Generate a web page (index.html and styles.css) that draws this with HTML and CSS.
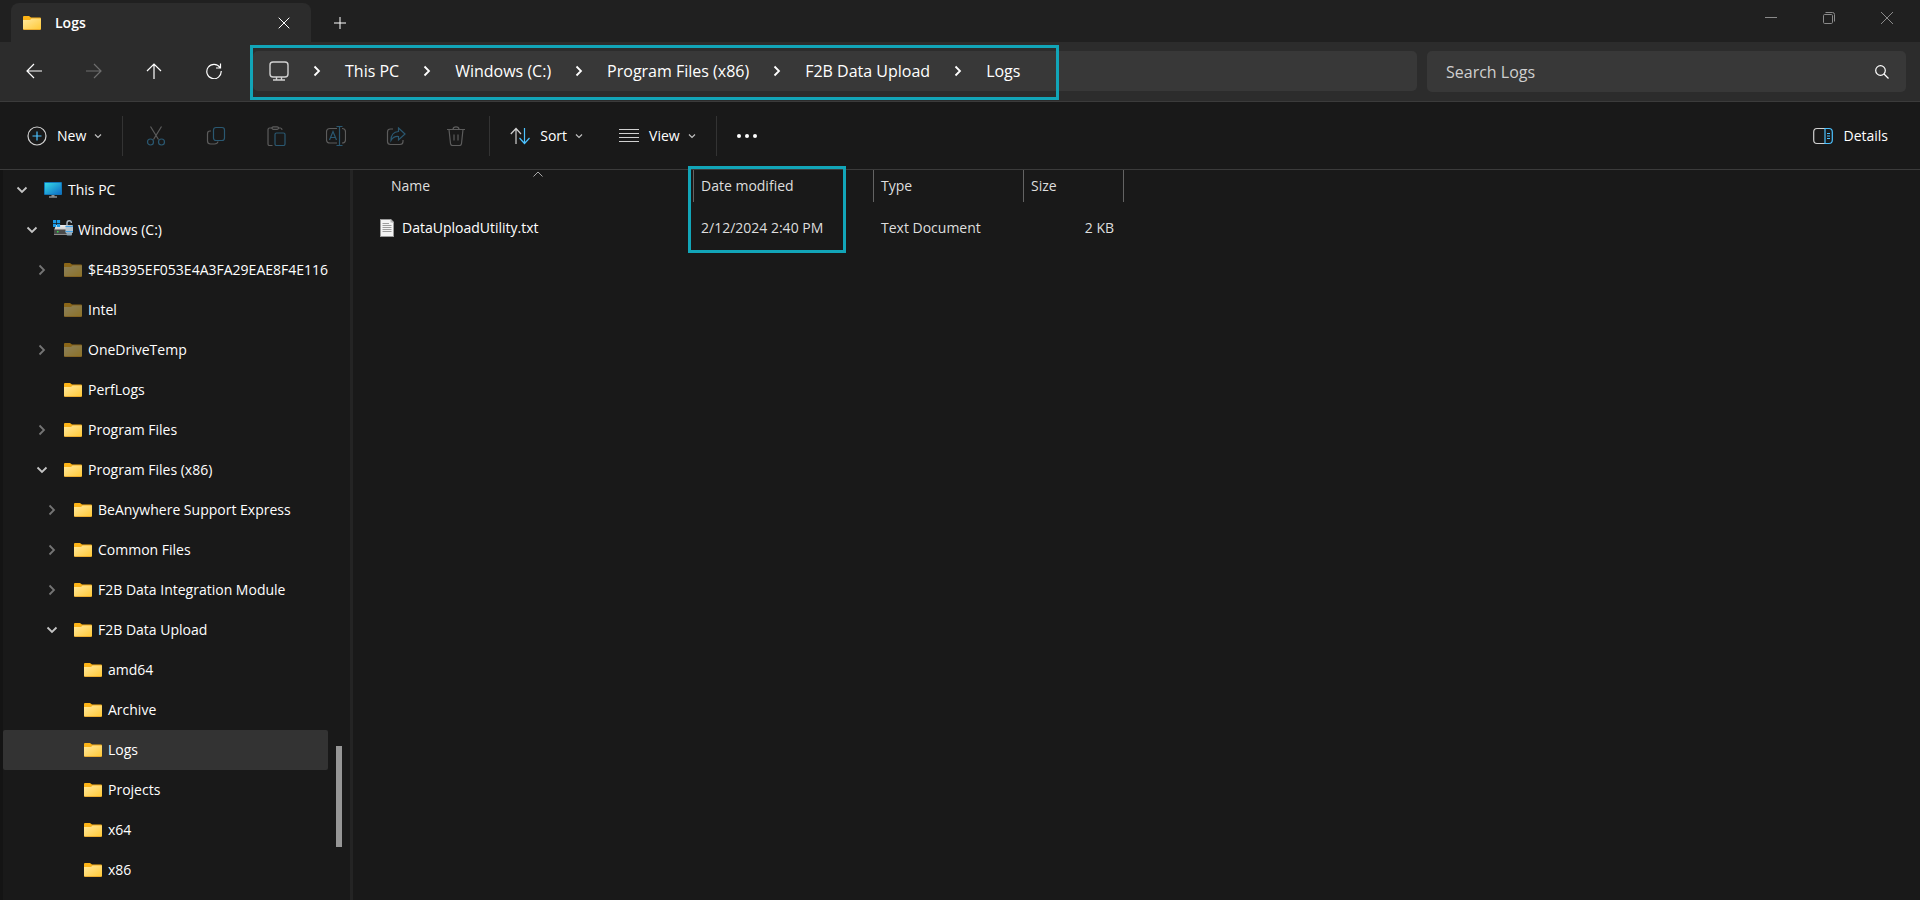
FILE: index.html
```html
<!DOCTYPE html>
<html lang="en">
<head>
    <meta charset="UTF-8">
    <meta name="viewport" content="width=device-width, initial-scale=1.0">
    <title>Logs</title>
    <link rel="stylesheet" href="styles.css">
</head>
<body>

    <!-- Shared icons -->
    <svg class="sprite" aria-hidden="true">
        <defs>
            <linearGradient id="folderFill" x1="0" y1="0" x2="1" y2="1">
                <stop offset="0" stop-color="#ffe9a0"/>
                <stop offset="1" stop-color="#ffc937"/>
            </linearGradient>
            <linearGradient id="screenFill" x1="0" y1="0" x2="1" y2="1">
                <stop offset="0" stop-color="#34d8e6"/>
                <stop offset="1" stop-color="#0f6cc4"/>
            </linearGradient>
            <linearGradient id="driveFill" x1="0" y1="0" x2="0" y2="1">
                <stop offset="0" stop-color="#f0f0f0"/>
                <stop offset="1" stop-color="#c4c4c4"/>
            </linearGradient>
        </defs>
        <symbol id="folder" viewBox="0 0 18 14">
            <path d="M0 1q0-1 1-1h5l2 1.500h9q1 0 1 1V5H0z" fill="#fcb316"/>
            <path d="M0 4h7l1.500-1.500H17.500q.5 0 .5.500V13q0 1-1 1H1q-1 0-1-1z" fill="#e5a024"/>
            <path d="M0 4h7l1.500-1.500H17.500q.5 0 .5.500V12.500q0 .7-.7.7H.7q-.7 0-.7-.7z" fill="url(#folderFill)"/>
        </symbol>
        <symbol id="monitor" viewBox="0 0 18 16">
            <rect width="18" height="13" rx="1" fill="#1176b8"/>
            <rect x="1" y="1" width="16" height="11" fill="url(#screenFill)"/>
            <path d="M7.500 13h3v1.500h-3z" fill="#8a8f94"/>
            <path d="M5 14.500h8v1H5z" fill="#c5c9cc"/>
        </symbol>
        <symbol id="drive" viewBox="0 0 20 16">
            <path d="M3 5h12l2 5.500H1z" fill="url(#driveFill)"/>
            <path d="M0 0h3.200v3.200H0zM3.900 0h3.200v3.200H3.900zM0 3.900h3.200v3.200H0zM3.900 3.900h3.200v3.200H3.900z" fill="#1c9be6"/>
            <rect x="1" y="9.500" width="14" height="5.500" fill="#4a4a4a"/>
            <path d="M1 14h14v1H1z" fill="#8c8c8c"/>
            <rect x="4" y="11" width="1.500" height="1.500" fill="#35e04a"/>
            <path d="M14 5V3q0-2.300 2.200-2.300T18.400 3" fill="none" stroke="#a9b6c0" stroke-width="1.400"/>
            <rect x="12.500" y="5" width="7.500" height="8" rx="1" fill="#b3c3ce"/>
            <path d="M12.500 6h7.500v1h-7.500zM12.500 11h7.500v1h-7.500z" fill="#3fa0e6"/>
            <path d="M13.500 12.500h5.500v2q0 1-1 1h-3.500q-1 0-1-1z" fill="#8ba4b5"/>
        </symbol>
        <symbol id="chevDown" viewBox="0 0 12 12">
            <path d="M1.500 3.500L6 8l4.500-4.500" fill="none" stroke="currentColor" stroke-width="1.800"/>
        </symbol>
        <symbol id="chevRight" viewBox="0 0 12 12">
            <path d="M3.500 1.500L8 6l-4.500 4.500" fill="none" stroke="currentColor" stroke-width="1.800"/>
        </symbol>
        <symbol id="chevSmall" viewBox="0 0 8 8">
            <path d="M1 2.500l3 3 3-3" fill="none" stroke="currentColor" stroke-width="1.200"/>
        </symbol>
    </svg>

    <div class="window">

        <!-- Title bar -->
        <header class="titlebar">
            <div class="tab">
                <svg class="folder-icon"><use href="#folder"/></svg>
                <span class="tab-title">Logs</span>
                <button class="tab-close" aria-label="Close tab">
                    <svg width="12" height="12" viewBox="0 0 12 12"><path d="M.7.7l10.600 10.600M11.300.7L.7 11.300"/></svg>
                </button>
            </div>
            <button class="tab-new" aria-label="New tab">
                <svg width="12" height="12" viewBox="0 0 12 12"><path d="M6 0v12M0 6h12"/></svg>
            </button>
            <div class="window-buttons">
                <button aria-label="Minimize"><svg width="12" height="12" viewBox="0 0 12 12"><path d="M0 5.500h12"/></svg></button>
                <button aria-label="Restore"><svg width="12" height="12" viewBox="0 0 12 12"><rect x=".5" y="2.500" width="9" height="9" rx="1.200"/><path d="M2.500.5H9.500q2 0 2 2V9.500"/></svg></button>
                <button aria-label="Close"><svg width="12" height="12" viewBox="0 0 12 12"><path d="M0 0l12 12M12 0L0 12"/></svg></button>
            </div>
        </header>

        <!-- Navigation bar -->
        <div class="navbar">
            <div class="nav-buttons">
                <button aria-label="Back"><svg width="16" height="16" viewBox="0 0 16 16"><path d="M16 8H1M8 1L1 8l7 7"/></svg></button>
                <button aria-label="Forward" disabled><svg width="16" height="16" viewBox="0 0 16 16"><path d="M0 8h15M8 1l7 7-7 7"/></svg></button>
                <button aria-label="Up"><svg width="16" height="16" viewBox="0 0 16 16"><path d="M8 16V1M1 8l7-7 7 7"/></svg></button>
                <button aria-label="Refresh"><svg width="16" height="16" viewBox="0 0 16 16"><path d="M14 4.500A7.200 7.200 0 1 0 15.200 8M14.500.5v4.500H10"/></svg></button>
            </div>
            <div class="address">
                <nav class="breadcrumb" aria-label="Address">
                    <svg class="crumb-pc" width="20" height="20" viewBox="0 0 20 20"><rect x="1" y="1" width="18" height="15" rx="3"/><path d="M7.500 16v3M12.500 16v3M4 19h12"/></svg>
                    <svg class="crumb-sep"><use href="#chevRight"/></svg>
                    <a href="#">This PC</a>
                    <svg class="crumb-sep"><use href="#chevRight"/></svg>
                    <a href="#">Windows (C:)</a>
                    <svg class="crumb-sep"><use href="#chevRight"/></svg>
                    <a href="#">Program Files (x86)</a>
                    <svg class="crumb-sep"><use href="#chevRight"/></svg>
                    <a href="#">F2B Data Upload</a>
                    <svg class="crumb-sep"><use href="#chevRight"/></svg>
                    <a href="#">Logs</a>
                </nav>
            </div>
            <form class="search">
                <input type="text" placeholder="Search Logs" aria-label="Search Logs">
                <button type="button" aria-label="Search">
                    <svg width="14" height="14" viewBox="0 0 14 14"><circle cx="5.500" cy="5.500" r="4.800"/><path d="M9 9l4.500 4.500"/></svg>
                </button>
            </form>
        </div>

        <!-- Command bar -->
        <div class="commandbar">
            <button class="command new">
                <svg class="cmd-icon" viewBox="0 0 20 20"><circle cx="10" cy="10" r="9"/><path class="blue" d="M10 5.500v9M5.500 10h9"/></svg>
                <span>New</span>
                <svg class="caret"><use href="#chevSmall"/></svg>
            </button>
            <span class="divider"></span>
            <div class="file-actions">
                <button aria-label="Cut" disabled><svg class="cmd-icon" viewBox="0 0 20 20"><path d="M4.500.5l8 13M15.500.5l-8 13"/><circle class="blue" cx="4.500" cy="16" r="3"/><circle class="blue" cx="15.500" cy="16" r="3"/></svg></button>
                <button aria-label="Copy" disabled><svg class="cmd-icon" viewBox="0 0 20 20"><path d="M5 5H4Q1.500 5 1.500 8v7q0 3 3 3h4q3 0 3.500-2.500"/><rect class="blue" x="7.500" y="1.500" width="11" height="13" rx="2.500"/></svg></button>
                <button aria-label="Paste" disabled><svg class="cmd-icon" viewBox="0 0 20 20"><path d="M6.500 19.500h-3q-1.500 0-1.500-1.500V4q0-2 1.500-2H6M12 2h2.500Q16 2 16 4"/><rect x="6" y=".8" width="6.500" height="2.500" rx="1.200"/><rect class="blue" x="9" y="7" width="10" height="12.500" rx="1.500"/></svg></button>
                <button aria-label="Rename" disabled><svg class="cmd-icon" viewBox="0 0 20 20"><path d="M11 2.500H4q-3.500 0-3.500 3.500v7.500Q.5 17 4 17h7M16 2.500q3.500 0 3.500 3.500v7.500Q19.500 17 16 17"/><path class="blue" d="M3.500 14L7 5.500 10.500 14M5 11.500h4M13.500.5v19M10.500.5h6M10.500 19.500h6"/></svg></button>
                <button aria-label="Share" disabled><svg class="cmd-icon" viewBox="0 0 20 20"><path d="M7 3H4.500Q1.500 3 1.500 6v9.500q0 3 3 3H14q3 0 3-3V14"/><path class="blue" d="M12.500 2l6.500 6-6.500 6v-3.500Q7.500 10 5 14.500 5 6 12.500 5.500z"/></svg></button>
                <button aria-label="Delete" disabled><svg class="cmd-icon" viewBox="0 0 20 20"><path d="M1 3.500h18M7 3.500Q7 .8 10 .8t3 2.700M3 3.500l1.500 14q.2 2 2 2h7q1.800 0 2-2L17 3.500M8 8.500v6M12 8.500v6"/></svg></button>
            </div>
            <span class="divider"></span>
            <button class="command">
                <svg class="cmd-icon" viewBox="0 0 20 20"><path d="M6 18V2.500M.8 8L6 2.500 11 8"/><path class="blue" d="M14.500 2v15.500M9.500 12l5 5.500 5-5.500"/></svg>
                <span>Sort</span>
                <svg class="caret"><use href="#chevSmall"/></svg>
            </button>
            <button class="command view">
                <svg class="cmd-icon" viewBox="0 0 20 20"><path d="M0 3.500h20M0 7.500h20M0 11.500h20M0 15.500h20"/></svg>
                <span>View</span>
                <svg class="caret"><use href="#chevSmall"/></svg>
            </button>
            <span class="divider"></span>
            <button class="more" aria-label="See more">
                <svg width="20" height="4" viewBox="0 0 20 4"><circle cx="2" cy="2" r="2"/><circle cx="10" cy="2" r="2"/><circle cx="18" cy="2" r="2"/></svg>
            </button>
            <button class="command details">
                <svg class="cmd-icon" viewBox="0 0 20 20"><path d="M12 2.500H4Q.7 2.500.7 6v8q0 3.500 3.300 3.500h8"/><path class="blue" d="M12 2.500h4q3.300 0 3.300 3.500v8q0 3.500-3.300 3.500h-4zM14 7.500h3M14 10h3M14 12.500h3"/></svg>
                <span>Details</span>
            </button>
        </div>

        <div class="content">

            <!-- Folder tree -->
            <aside class="sidebar">
                <ul class="tree">
                    <li class="level-0"><button class="toggle open" aria-label="Collapse"><svg><use href="#chevDown"/></svg></button><svg class="tree-icon"><use href="#monitor"/></svg><a href="#">This PC</a></li>
                    <li class="level-1"><button class="toggle open" aria-label="Collapse"><svg><use href="#chevDown"/></svg></button><svg class="tree-icon drive-icon"><use href="#drive"/></svg><a href="#">Windows (C:)</a></li>
                    <li class="level-2"><button class="toggle" aria-label="Expand"><svg><use href="#chevRight"/></svg></button><svg class="tree-icon dim"><use href="#folder"/></svg><a href="#">$E4B395EF053E4A3FA29EAE8F4E116</a></li>
                    <li class="level-2"><span class="toggle"></span><svg class="tree-icon dim"><use href="#folder"/></svg><a href="#">Intel</a></li>
                    <li class="level-2"><button class="toggle" aria-label="Expand"><svg><use href="#chevRight"/></svg></button><svg class="tree-icon dim"><use href="#folder"/></svg><a href="#">OneDriveTemp</a></li>
                    <li class="level-2"><span class="toggle"></span><svg class="tree-icon"><use href="#folder"/></svg><a href="#">PerfLogs</a></li>
                    <li class="level-2"><button class="toggle" aria-label="Expand"><svg><use href="#chevRight"/></svg></button><svg class="tree-icon"><use href="#folder"/></svg><a href="#">Program Files</a></li>
                    <li class="level-2"><button class="toggle open" aria-label="Collapse"><svg><use href="#chevDown"/></svg></button><svg class="tree-icon"><use href="#folder"/></svg><a href="#">Program Files (x86)</a></li>
                    <li class="level-3"><button class="toggle" aria-label="Expand"><svg><use href="#chevRight"/></svg></button><svg class="tree-icon"><use href="#folder"/></svg><a href="#">BeAnywhere Support Express</a></li>
                    <li class="level-3"><button class="toggle" aria-label="Expand"><svg><use href="#chevRight"/></svg></button><svg class="tree-icon"><use href="#folder"/></svg><a href="#">Common Files</a></li>
                    <li class="level-3"><button class="toggle" aria-label="Expand"><svg><use href="#chevRight"/></svg></button><svg class="tree-icon"><use href="#folder"/></svg><a href="#">F2B Data Integration Module</a></li>
                    <li class="level-3"><button class="toggle open" aria-label="Collapse"><svg><use href="#chevDown"/></svg></button><svg class="tree-icon"><use href="#folder"/></svg><a href="#">F2B Data Upload</a></li>
                    <li class="level-4"><span class="toggle"></span><svg class="tree-icon"><use href="#folder"/></svg><a href="#">amd64</a></li>
                    <li class="level-4"><span class="toggle"></span><svg class="tree-icon"><use href="#folder"/></svg><a href="#">Archive</a></li>
                    <li class="level-4 selected"><span class="toggle"></span><svg class="tree-icon"><use href="#folder"/></svg><a href="#">Logs</a></li>
                    <li class="level-4"><span class="toggle"></span><svg class="tree-icon"><use href="#folder"/></svg><a href="#">Projects</a></li>
                    <li class="level-4"><span class="toggle"></span><svg class="tree-icon"><use href="#folder"/></svg><a href="#">x64</a></li>
                    <li class="level-4"><span class="toggle"></span><svg class="tree-icon"><use href="#folder"/></svg><a href="#">x86</a></li>
                </ul>
                <div class="scrollbar"><div class="thumb"></div></div>
            </aside>

            <!-- File list -->
            <main class="files">
                <table>
                    <colgroup>
                        <col class="col-name">
                        <col class="col-date">
                        <col class="col-type">
                        <col class="col-size">
                    </colgroup>
                    <thead>
                        <tr>
                            <th class="sorted">Name<svg width="10" height="6" viewBox="0 0 10 6"><path d="M.5 5.500L5 1l4.500 4.500"/></svg></th>
                            <th class="marked">Date modified</th>
                            <th>Type</th>
                            <th>Size</th>
                        </tr>
                    </thead>
                    <tbody>
                        <tr>
                            <td class="file-name">
                                <a href="#">
                                    <svg width="14" height="18" viewBox="0 0 14 18"><path d="M0 0h11l3 3v15H0z" fill="#9a9a9a"/><path d="M1 1h9.500L13 3.500V17H1z" fill="#f4f4f4"/><path d="M10.500 0v3.500H14z" fill="#b5b5b5"/><path d="M2.500 4.500H9M2.500 6.500h9M2.500 8.500h9M2.500 10.500h9M2.500 12.500h9" stroke="#9d9d9d" fill="none"/></svg>
                                    DataUploadUtility.txt
                                </a>
                            </td>
                            <td>2/12/2024 2:40 PM</td>
                            <td>Text Document</td>
                            <td class="file-size">2 KB</td>
                        </tr>
                    </tbody>
                </table>
            </main>

        </div>
    </div>

</body>
</html>
```
FILE: styles.css
```css
/* General Styles */
*,
*::after {
    box-sizing: border-box;
}

body {
    margin: 0;
    font-family: "Open Sans", "Noto Sans", sans-serif;
    font-size: 14px;
    line-height: 20px;
    color: #fff;
    background-color: #191919;
}

a {
    color: inherit;
    text-decoration: none;
}

button {
    display: flex;
    flex: none;
    align-items: center;
    justify-content: center;
    padding: 0;
    border: none;
    background: none;
    color: inherit;
    font: inherit;
}

svg {
    flex: none;
    display: block;
}

button svg,
.crumb-pc,
.sorted svg {
    fill: none;
    stroke: currentColor;
}

.sprite {
    position: absolute;
    width: 0;
    height: 0;
}

.window {
    display: flex;
    flex-direction: column;
    min-height: 100vh;
}

/* Title bar */
.titlebar {
    display: flex;
    height: 42px;
    padding-left: 11px;
    background-color: #202020;
}

.tab {
    display: flex;
    align-items: center;
    width: 300px;
    margin-top: 3px;
    padding: 0 12px;
    border-radius: 8px 8px 0 0;
    background-color: #2c2c2c;
}

.folder-icon {
    width: 18px;
    height: 14px;
}

.tab-title {
    flex: 1;
    margin-left: 14px;
    font-weight: 600;
}

.tab-close {
    width: 30px;
    height: 30px;
}

.tab-new {
    width: 58px;
    height: 46px;
}

.window-buttons {
    display: flex;
    margin-left: auto;
    padding-right: 4px;
    color: #8a8a8a;
}

.window-buttons button {
    width: 58px;
    height: 36px;
}

/* Navigation bar */
.navbar {
    display: flex;
    align-items: flex-start;
    gap: 10px;
    padding: 9px 14px 9px 4px;
    border-bottom: 1px solid #3b3b3b;
    background-color: #2c2c2c;
}

.nav-buttons {
    display: flex;
    width: 239px;
}

.nav-buttons button {
    width: 60px;
    height: 40px;
    stroke-width: 1.2;
}

.nav-buttons button:disabled {
    color: #6e6e6e;
}

.address,
.search {
    display: flex;
    height: 40px;
    border-radius: 5px;
    background-color: #383838;
    font-size: 16px;
}

.address {
    flex: 1;
}

.breadcrumb {
    position: relative;
    display: flex;
    align-items: center;
    padding: 0 39px 0 16px;
}

/* Highlight frames */
.breadcrumb::after,
.marked::after {
    content: "";
    position: absolute;
    border: 3px solid #12a5b8;
}

.breadcrumb::after {
    inset: -6px 0 -9px -3px;
}

.crumb-sep {
    width: 12px;
    height: 12px;
    margin: 0 22px;
}

.crumb-pc {
    color: #d0d0d0;
    stroke-width: 1.4;
}

.search {
    width: 479px;
    height: 41px;
}

.search input {
    flex: 1;
    min-width: 0;
    padding: 0 19px;
    border: none;
    outline: none;
    background: none;
    color: #fff;
    font: inherit;
}

.search input::placeholder {
    color: #cfcfcf;
    opacity: 1;
}

.search button {
    width: 48px;
    stroke-width: 1.2;
}

/* Command bar */
.commandbar {
    display: flex;
    align-items: center;
    height: 68px;
    padding: 0 32px 0 27px;
    border-bottom: 1px solid #3b3b3b;
}

.command {
    gap: 10px;
    height: 40px;
}

.cmd-icon {
    width: 20px;
    height: 20px;
    color: #d0d0d0;
    stroke-width: 1.2;
}

.blue {
    stroke: #4cc2ff;
}

.caret {
    width: 8px;
    height: 8px;
    margin-left: -2px;
    color: #c0c0c0;
}

.divider {
    width: 1px;
    height: 40px;
    margin: 0 20px;
    background-color: #333;
}

.file-actions {
    display: flex;
    margin: 0 -17px;
}

.file-actions button {
    width: 60px;
    height: 40px;
}

.file-actions .cmd-icon {
    color: #5c5c5c;
}

.file-actions .blue {
    stroke: #2a5871;
}

.view {
    margin-left: 36px;
}

.more svg {
    fill: #fff;
    stroke: none;
}

.details {
    margin-left: auto;
}

/* Folder tree */
.content {
    display: flex;
    flex: 1;
}

.sidebar {
    display: flex;
    justify-content: space-between;
    width: 353px;
    border-left: 3px solid #141414;
    border-right: 3px solid #242424;
}

.tree {
    width: 325px;
    margin: 0;
    padding: 0;
    list-style: none;
}

.tree li {
    display: flex;
    align-items: center;
    height: 40px;
    overflow: hidden;
    border-radius: 2px;
    white-space: nowrap;
}

.tree .selected {
    background-color: #333;
}

.level-0 {
    padding-left: 13px;
}

.level-1 {
    padding-left: 23px;
}

.level-2 {
    padding-left: 33px;
}

.level-3 {
    padding-left: 43px;
}

.level-4 {
    padding-left: 53px;
}

.toggle {
    flex: none;
    width: 12px;
    height: 12px;
    margin-right: 16px;
    color: #747474;
}

.toggle svg {
    width: 12px;
    height: 12px;
}

.toggle.open {
    color: #c4c4c4;
}

.tree-icon {
    width: 18px;
    height: 16px;
    margin-right: 6px;
}

.drive-icon {
    width: 20px;
    margin: 0 5px 4px -1px;
}

.dim {
    opacity: 0.5;
}

.scrollbar {
    display: flex;
    flex-direction: column;
    justify-content: flex-end;
    width: 14px;
    padding-bottom: 53px;
}

.thumb {
    width: 6px;
    height: 101px;
    background-color: #969696;
}

/* File list */
.files {
    flex: 1;
}

table {
    width: 771px;
    table-layout: fixed;
    border-collapse: separate;
    border-spacing: 0;
}

.col-name {
    width: 341px;
}

.col-date {
    width: 180px;
}

.col-type {
    width: 150px;
}

.col-size {
    width: 100px;
}

th,
td {
    padding: 0 10px 0 7px;
    color: #dedede;
    font-weight: 400;
    text-align: left;
    white-space: nowrap;
}

th {
    position: relative;
    height: 32px;
    border-right: 1px solid #636363;
}

th.sorted {
    padding-left: 38px;
}

.sorted svg {
    position: absolute;
    top: 1px;
    left: 180px;
    color: #a8a8a8;
}

.marked::after {
    top: -4px;
    left: -6px;
    width: 158px;
    height: 87px;
}

td {
    height: 52px;
}

.file-name a {
    display: flex;
    align-items: center;
    gap: 8px;
    padding-left: 20px;
    color: #fff;
}

td.file-size {
    text-align: right;
}
```
